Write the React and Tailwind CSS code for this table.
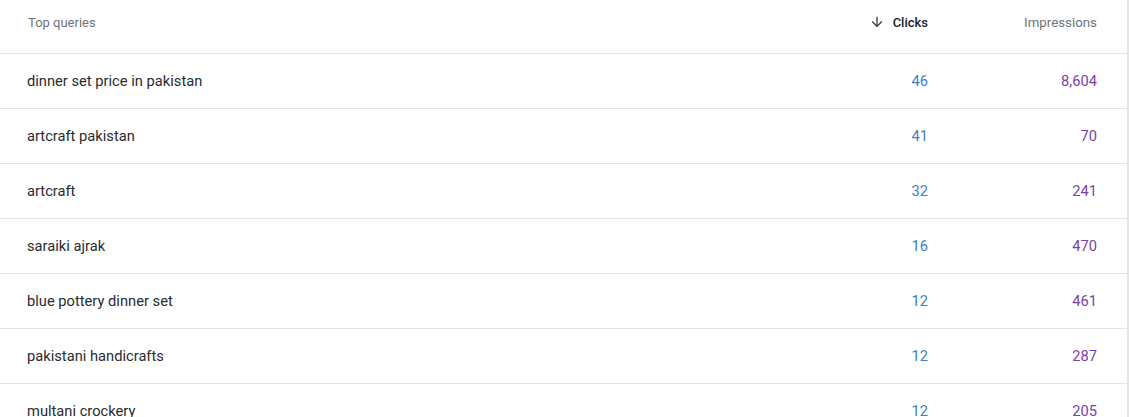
import React from "react";

const rows = [
  ["dinner set price in pakistan", "46", "8,604"],
  ["artcraft pakistan", "41", "70"],
  ["artcraft", "32", "241"],
  ["saraiki ajrak", "16", "470"],
  ["blue pottery dinner set", "12", "461"],
  ["pakistani handicrafts", "12", "287"],
  ["multani crockery", "12", "205"],
];

export default function App() {
  return (
    <div className="flex w-[1130px] h-[417px] overflow-hidden bg-white" style={{ fontFamily: "Roboto, 'Liberation Sans', sans-serif" }}>
      <div className="w-[1127px] flex flex-col">
        <div className="flex shrink-0 h-[54px] border-b border-[#e3e3e3] pt-[13px] pl-[28px] pr-[30px] text-[13px] text-[#6f7378]">
          <div className="flex-1">Top queries</div>
          <div className="w-[150px] flex justify-end items-start gap-[8px] text-[#202124] font-medium">
            <svg width="16" height="16" viewBox="0 0 24 24" className="mt-[1px]" fill="#3c4043">
              <path d="M20 12l-1.41-1.41L13 16.17V4h-2v12.17l-5.58-5.59L4 12l8 8 8-8z" />
            </svg>
            <span>Clicks</span>
          </div>
          <div className="w-[169px] text-right text-[13.3px]">Impressions</div>
        </div>
        {rows.map(([q, c, i]) => (
          <div key={q} className="flex items-center h-[55px] shrink-0 border-b border-[#e3e3e3] pl-[27px] pr-[30px] text-[14.7px]">
            <div className="flex-1 text-[#2a2b2e]">{q}</div>
            <div className="w-[150px] text-right text-[#3d7fc4]">{c}</div>
            <div className="w-[169px] text-right text-[#7b3fa6]">{i}</div>
          </div>
        ))}
      </div>
      <div className="w-[2px] bg-[#e6e6e6]" />
      <div className="flex-1" />
    </div>
  );
}
